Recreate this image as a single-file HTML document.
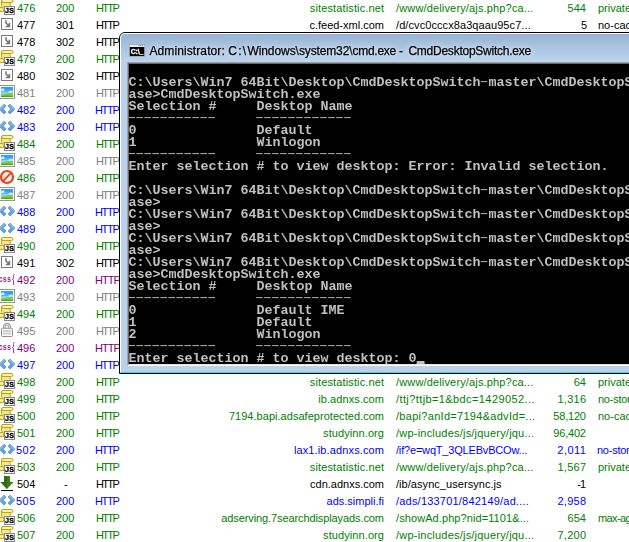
<!DOCTYPE html>
<html><head><meta charset="utf-8"><title>Fiddler</title>
<style>
html,body{margin:0;padding:0;background:#fff;}
body{width:629px;height:542px;overflow:hidden;}
#root{position:relative;width:629px;height:542px;overflow:hidden;background:#fff;font-family:"Liberation Sans",sans-serif;font-size:11px;}
.r{position:absolute;left:0;width:629px;height:17px;line-height:17px;white-space:pre;}
.r span{position:absolute;top:1px;height:17px;}
.ic{position:absolute;left:-1px;top:0;will-change:transform;}
.n{left:17px}.s{left:56px}.p{left:95px}
.h{right:245px;text-align:right}
.u{left:396px}
.b{right:43px;text-align:right}
.c{left:597px}
#win{position:absolute;left:119px;top:32px;width:560px;height:342px;box-sizing:border-box;border:1px solid #000;border-radius:6px 6px 0 0;background:#b9d1ea;overflow:hidden;}
#win .hl{position:absolute;left:0;top:0;right:0;bottom:0;border:1px solid #fff;border-bottom-color:#35d0e8;border-radius:5px 5px 0 0;}
#tb{position:absolute;left:1px;top:1px;right:0;height:28px;background:linear-gradient(#98b4d4,#bcd4ef);}
#ttl{-webkit-text-stroke:0.250px #000;position:absolute;left:0;top:10px;font-size:12px;line-height:16px;color:#000;white-space:pre;text-shadow:0 0 5px rgba(255,255,255,.75),0 0 9px rgba(255,255,255,.6);}
#cicon{position:absolute;left:9px;top:11px;will-change:transform;}
#edge{position:absolute;left:7px;top:29px;width:600px;height:304px;box-sizing:border-box;border:1px solid #a0a0a0;border-right-color:#fff;border-bottom-color:#fff;}
#edge2{position:absolute;left:0;top:0;right:0;bottom:0;border:1px solid #696969;border-right-color:#e3e3e3;border-bottom-color:#e3e3e3;}
#con{position:absolute;left:9px;top:31px;width:580px;height:300px;background:#000;color:#c0c0c0;font-family:"Liberation Mono",monospace;font-weight:bold;font-size:12px;line-height:12px;white-space:pre;overflow:hidden;margin:0;transform:scaleX(1.11093);transform-origin:0 0;will-change:transform;}
.l{position:relative;height:12px;top:1px;left:-0.400px;}
.hc{display:inline-block;position:relative;width:7.201px;height:12px;vertical-align:top;}
.d{position:absolute;left:-3.520px;top:-1px;font-weight:normal;color:#b0b0b0;letter-spacing:-3.200px;transform:scaleX(1.8);transform-origin:0 0;}
.d2{left:111.700px}
.cb{position:absolute;left:259.240px;top:8px;width:7.200px;height:3px;background:#c0c0c0;}
#ttl span{position:absolute;top:0;}
</style></head><body><div id="root">

<div class="r" style="top:-1px;color:#008000"><svg class="ic" width="16" height="16" viewBox="0 0 16 16"><path d="M2.500 1.500L11 3.500L12 12.500H4.500L2.500 6z" fill="#f5e88a" stroke="#c6a200" stroke-width="1"/><rect x="2.500" y="0.500" width="11.500" height="3" rx="1.500" fill="#f8efa4" stroke="#c6a200" stroke-width="1"/><path d="M4.500 2h8" stroke="#fdf8d0" stroke-width="1" fill="none"/><rect x="-0.500" y="8.500" width="5.500" height="4" rx="1.500" fill="#f5e88a" stroke="#c6a200" stroke-width="1"/><path d="M0 10.500h3.500" stroke="#fbf3b8" stroke-width="1" fill="none"/><rect x="5.500" y="7.500" width="10" height="8" fill="#fff" stroke="#85859a" stroke-width="1"/><text x="10.600" y="14" text-anchor="middle" font-family="Liberation Sans, sans-serif" font-weight="bold" font-size="7.200px" fill="#000" stroke="#000" stroke-width="0.300" letter-spacing="0.300">JS</text></svg><span class="n" style="left:17.00px;letter-spacing:0.000px">476</span><span class="s" style="left:56.00px;letter-spacing:0.000px">200</span><span class="p" style="left:96.00px;letter-spacing:-1.667px">HTTP</span><span class="h" style="right:auto;left:309.86px;letter-spacing:0.125px">sitestatistic.net</span><span class="u" style="left:396.00px;letter-spacing:0.154px">/www/delivery/ajs.php?ca...</span><span class="b" style="right:auto;left:567.61px;letter-spacing:0.000px">544</span><span class="c" style="left:598.00px;letter-spacing:0.000px">private</span></div>
<div class="r" style="top:16px;color:#000000"><svg class="ic" width="16" height="16" viewBox="0 0 16 16"><rect x="2.500" y="2.500" width="11" height="11" fill="#fff" stroke="#7c7c7c"/><path d="M7 4.300v2.700l3 3M10.400 6.800v3.700h-3.700" fill="none" stroke="#787878" stroke-width="1.600"/></svg><span class="n" style="left:17.00px;letter-spacing:0.000px">477</span><span class="s" style="left:56.00px;letter-spacing:0.000px">301</span><span class="p" style="left:96.00px;letter-spacing:-1.667px">HTTP</span><span class="h" style="right:auto;left:309.41px;letter-spacing:0.000px">c.feed-xml.com</span><span class="u" style="left:396.00px;letter-spacing:0.083px">/d/cvc0cccx8a3qaau95c7...</span><span class="b" style="right:auto;left:580.88px;letter-spacing:0.000px">5</span><span class="c" style="left:598.00px;letter-spacing:0.000px">no-cache</span></div>
<div class="r" style="top:33px;color:#000000"><svg class="ic" width="16" height="16" viewBox="0 0 16 16"><rect x="2.500" y="2.500" width="11" height="11" fill="#fff" stroke="#7c7c7c"/><path d="M7 4.300v2.700l3 3M10.400 6.800v3.700h-3.700" fill="none" stroke="#787878" stroke-width="1.600"/></svg><span class="n" style="left:17.00px;letter-spacing:0.000px">478</span><span class="s" style="left:56.00px;letter-spacing:0.000px">302</span><span class="p" style="left:96.00px;letter-spacing:-1.667px">HTTP</span></div>
<div class="r" style="top:50px;color:#008000"><svg class="ic" width="16" height="16" viewBox="0 0 16 16"><path d="M2.500 1.500L11 3.500L12 12.500H4.500L2.500 6z" fill="#f5e88a" stroke="#c6a200" stroke-width="1"/><rect x="2.500" y="0.500" width="11.500" height="3" rx="1.500" fill="#f8efa4" stroke="#c6a200" stroke-width="1"/><path d="M4.500 2h8" stroke="#fdf8d0" stroke-width="1" fill="none"/><rect x="-0.500" y="8.500" width="5.500" height="4" rx="1.500" fill="#f5e88a" stroke="#c6a200" stroke-width="1"/><path d="M0 10.500h3.500" stroke="#fbf3b8" stroke-width="1" fill="none"/><rect x="5.500" y="7.500" width="10" height="8" fill="#fff" stroke="#85859a" stroke-width="1"/><text x="10.600" y="14" text-anchor="middle" font-family="Liberation Sans, sans-serif" font-weight="bold" font-size="7.200px" fill="#000" stroke="#000" stroke-width="0.300" letter-spacing="0.300">JS</text></svg><span class="n" style="left:17.00px;letter-spacing:0.000px">479</span><span class="s" style="left:56.00px;letter-spacing:0.000px">200</span><span class="p" style="left:96.00px;letter-spacing:-1.667px">HTTP</span></div>
<div class="r" style="top:67px;color:#000000"><svg class="ic" width="16" height="16" viewBox="0 0 16 16"><rect x="2.500" y="2.500" width="11" height="11" fill="#fff" stroke="#7c7c7c"/><path d="M7 4.300v2.700l3 3M10.400 6.800v3.700h-3.700" fill="none" stroke="#787878" stroke-width="1.600"/></svg><span class="n" style="left:17.00px;letter-spacing:0.000px">480</span><span class="s" style="left:56.00px;letter-spacing:0.000px">302</span><span class="p" style="left:96.00px;letter-spacing:-1.667px">HTTP</span></div>
<div class="r" style="top:84px;color:#808080"><svg class="ic" width="16" height="16" viewBox="0 0 16 16"><rect x="0.500" y="1.500" width="15" height="13" fill="#fff" stroke="#94949a"/><rect x="2" y="3" width="12" height="4" fill="#349ff0"/><rect x="2" y="6" width="12" height="2" fill="#58b4f4"/><rect x="2" y="8" width="12" height="3" fill="#8ed0f8"/><path d="M2 5.500c1-2 3.500-1.500 3.800 1l-3.800 1zM9 8.500c1-2 3.500-2.500 5-1v2z" fill="#c8ecfb"/><path d="M2 10.500c4-0.300 7-2 12-1.800v4.300h-12z" fill="#86cc38"/><path d="M2 12c3-0.800 8-0.800 12 0v1h-12z" fill="#4aa41e"/></svg><span class="n" style="left:17.00px;letter-spacing:0.000px">481</span><span class="s" style="left:56.00px;letter-spacing:0.000px">200</span><span class="p" style="left:96.00px;letter-spacing:-1.667px">HTTP</span></div>
<div class="r" style="top:101px;color:#0000ff"><svg class="ic" width="16" height="16" viewBox="0 0 16 16"><path d="M5 3L0 8l5 5 2-2-3-3 3-3z" fill="#62a2de" stroke="#3f7fc6" stroke-width="0.600"/><path d="M11 3l5 5-5 5-2-2 3-3-3-3z" fill="#62a2de" stroke="#3f7fc6" stroke-width="0.600"/><path d="M5 3L0 8l1 1 5-5z" fill="#8cbce8"/><path d="M11 3l5 5-1 1-5-5z" fill="#8cbce8"/></svg><span class="n" style="left:17.00px;letter-spacing:0.000px">482</span><span class="s" style="left:56.00px;letter-spacing:0.000px">200</span><span class="p" style="left:95.00px;letter-spacing:-1.333px">HTTP</span></div>
<div class="r" style="top:118px;color:#0000ff"><svg class="ic" width="16" height="16" viewBox="0 0 16 16"><path d="M5 3L0 8l5 5 2-2-3-3 3-3z" fill="#62a2de" stroke="#3f7fc6" stroke-width="0.600"/><path d="M11 3l5 5-5 5-2-2 3-3-3-3z" fill="#62a2de" stroke="#3f7fc6" stroke-width="0.600"/><path d="M5 3L0 8l1 1 5-5z" fill="#8cbce8"/><path d="M11 3l5 5-1 1-5-5z" fill="#8cbce8"/></svg><span class="n" style="left:17.00px;letter-spacing:0.000px">483</span><span class="s" style="left:56.00px;letter-spacing:0.000px">200</span><span class="p" style="left:95.00px;letter-spacing:-1.333px">HTTP</span></div>
<div class="r" style="top:135px;color:#008000"><svg class="ic" width="16" height="16" viewBox="0 0 16 16"><path d="M2.500 1.500L11 3.500L12 12.500H4.500L2.500 6z" fill="#f5e88a" stroke="#c6a200" stroke-width="1"/><rect x="2.500" y="0.500" width="11.500" height="3" rx="1.500" fill="#f8efa4" stroke="#c6a200" stroke-width="1"/><path d="M4.500 2h8" stroke="#fdf8d0" stroke-width="1" fill="none"/><rect x="-0.500" y="8.500" width="5.500" height="4" rx="1.500" fill="#f5e88a" stroke="#c6a200" stroke-width="1"/><path d="M0 10.500h3.500" stroke="#fbf3b8" stroke-width="1" fill="none"/><rect x="5.500" y="7.500" width="10" height="8" fill="#fff" stroke="#85859a" stroke-width="1"/><text x="10.600" y="14" text-anchor="middle" font-family="Liberation Sans, sans-serif" font-weight="bold" font-size="7.200px" fill="#000" stroke="#000" stroke-width="0.300" letter-spacing="0.300">JS</text></svg><span class="n" style="left:17.00px;letter-spacing:0.000px">484</span><span class="s" style="left:56.00px;letter-spacing:0.000px">200</span><span class="p" style="left:96.00px;letter-spacing:-1.667px">HTTP</span></div>
<div class="r" style="top:152px;color:#808080"><svg class="ic" width="16" height="16" viewBox="0 0 16 16"><rect x="0.500" y="1.500" width="15" height="13" fill="#fff" stroke="#94949a"/><rect x="2" y="3" width="12" height="4" fill="#349ff0"/><rect x="2" y="6" width="12" height="2" fill="#58b4f4"/><rect x="2" y="8" width="12" height="3" fill="#8ed0f8"/><path d="M2 5.500c1-2 3.500-1.500 3.800 1l-3.800 1zM9 8.500c1-2 3.500-2.500 5-1v2z" fill="#c8ecfb"/><path d="M2 10.500c4-0.300 7-2 12-1.800v4.300h-12z" fill="#86cc38"/><path d="M2 12c3-0.800 8-0.800 12 0v1h-12z" fill="#4aa41e"/></svg><span class="n" style="left:17.00px;letter-spacing:0.000px">485</span><span class="s" style="left:56.00px;letter-spacing:0.000px">200</span><span class="p" style="left:96.00px;letter-spacing:-1.667px">HTTP</span></div>
<div class="r" style="top:169px;color:#008000"><svg class="ic" width="16" height="16" viewBox="0 0 16 16"><circle cx="8" cy="8" r="6" fill="#fdeee8" stroke="#e8431f" stroke-width="2.200"/><path d="M4.200 11.800L11.800 4.200" stroke="#e8431f" stroke-width="1.800"/></svg><span class="n" style="left:17.00px;letter-spacing:0.000px">486</span><span class="s" style="left:56.00px;letter-spacing:0.000px">200</span><span class="p" style="left:96.00px;letter-spacing:-1.667px">HTTP</span></div>
<div class="r" style="top:186px;color:#808080"><svg class="ic" width="16" height="16" viewBox="0 0 16 16"><rect x="0.500" y="1.500" width="15" height="13" fill="#fff" stroke="#94949a"/><rect x="2" y="3" width="12" height="4" fill="#349ff0"/><rect x="2" y="6" width="12" height="2" fill="#58b4f4"/><rect x="2" y="8" width="12" height="3" fill="#8ed0f8"/><path d="M2 5.500c1-2 3.500-1.500 3.800 1l-3.800 1zM9 8.500c1-2 3.500-2.500 5-1v2z" fill="#c8ecfb"/><path d="M2 10.500c4-0.300 7-2 12-1.800v4.300h-12z" fill="#86cc38"/><path d="M2 12c3-0.800 8-0.800 12 0v1h-12z" fill="#4aa41e"/></svg><span class="n" style="left:17.00px;letter-spacing:0.000px">487</span><span class="s" style="left:56.00px;letter-spacing:0.000px">200</span><span class="p" style="left:96.00px;letter-spacing:-1.667px">HTTP</span></div>
<div class="r" style="top:203px;color:#0000ff"><svg class="ic" width="16" height="16" viewBox="0 0 16 16"><path d="M5 3L0 8l5 5 2-2-3-3 3-3z" fill="#62a2de" stroke="#3f7fc6" stroke-width="0.600"/><path d="M11 3l5 5-5 5-2-2 3-3-3-3z" fill="#62a2de" stroke="#3f7fc6" stroke-width="0.600"/><path d="M5 3L0 8l1 1 5-5z" fill="#8cbce8"/><path d="M11 3l5 5-1 1-5-5z" fill="#8cbce8"/></svg><span class="n" style="left:17.00px;letter-spacing:0.000px">488</span><span class="s" style="left:56.00px;letter-spacing:0.000px">200</span><span class="p" style="left:95.00px;letter-spacing:-1.333px">HTTP</span></div>
<div class="r" style="top:220px;color:#0000ff"><svg class="ic" width="16" height="16" viewBox="0 0 16 16"><path d="M5 3L0 8l5 5 2-2-3-3 3-3z" fill="#62a2de" stroke="#3f7fc6" stroke-width="0.600"/><path d="M11 3l5 5-5 5-2-2 3-3-3-3z" fill="#62a2de" stroke="#3f7fc6" stroke-width="0.600"/><path d="M5 3L0 8l1 1 5-5z" fill="#8cbce8"/><path d="M11 3l5 5-1 1-5-5z" fill="#8cbce8"/></svg><span class="n" style="left:17.00px;letter-spacing:0.000px">489</span><span class="s" style="left:56.00px;letter-spacing:0.000px">200</span><span class="p" style="left:95.00px;letter-spacing:-1.333px">HTTP</span></div>
<div class="r" style="top:237px;color:#008000"><svg class="ic" width="16" height="16" viewBox="0 0 16 16"><path d="M2.500 1.500L11 3.500L12 12.500H4.500L2.500 6z" fill="#f5e88a" stroke="#c6a200" stroke-width="1"/><rect x="2.500" y="0.500" width="11.500" height="3" rx="1.500" fill="#f8efa4" stroke="#c6a200" stroke-width="1"/><path d="M4.500 2h8" stroke="#fdf8d0" stroke-width="1" fill="none"/><rect x="-0.500" y="8.500" width="5.500" height="4" rx="1.500" fill="#f5e88a" stroke="#c6a200" stroke-width="1"/><path d="M0 10.500h3.500" stroke="#fbf3b8" stroke-width="1" fill="none"/><rect x="5.500" y="7.500" width="10" height="8" fill="#fff" stroke="#85859a" stroke-width="1"/><text x="10.600" y="14" text-anchor="middle" font-family="Liberation Sans, sans-serif" font-weight="bold" font-size="7.200px" fill="#000" stroke="#000" stroke-width="0.300" letter-spacing="0.300">JS</text></svg><span class="n" style="left:17.00px;letter-spacing:0.000px">490</span><span class="s" style="left:56.00px;letter-spacing:0.000px">200</span><span class="p" style="left:96.00px;letter-spacing:-1.667px">HTTP</span></div>
<div class="r" style="top:254px;color:#000000"><svg class="ic" width="16" height="16" viewBox="0 0 16 16"><rect x="2.500" y="2.500" width="11" height="11" fill="#fff" stroke="#7c7c7c"/><path d="M7 4.300v2.700l3 3M10.400 6.800v3.700h-3.700" fill="none" stroke="#787878" stroke-width="1.600"/></svg><span class="n" style="left:17.00px;letter-spacing:0.000px">491</span><span class="s" style="left:56.00px;letter-spacing:0.000px">302</span><span class="p" style="left:96.00px;letter-spacing:-1.667px">HTTP</span></div>
<div class="r" style="top:271px;color:#800080"><svg class="ic" width="16" height="16" viewBox="0 0 16 16"><text x="-0.300" y="11" font-family="Liberation Mono, monospace" font-weight="bold" font-size="9.500px" fill="#902090" textLength="12.300" lengthAdjust="spacingAndGlyphs">css</text><path d="M15.500 3.500c-1.500 0-1 0.500-1 2v1.500c0 1-0.500 1.500-1.500 1.500c1 0 1.500 0.500 1.500 1.500v2c0 1.500-0.500 2 1 2" fill="none" stroke="#a03898" stroke-width="1"/></svg><span class="n" style="left:17.00px;letter-spacing:0.000px">492</span><span class="s" style="left:56.00px;letter-spacing:0.000px">200</span><span class="p" style="left:95.00px;letter-spacing:-1.000px">HTTP</span></div>
<div class="r" style="top:288px;color:#808080"><svg class="ic" width="16" height="16" viewBox="0 0 16 16"><rect x="0.500" y="1.500" width="15" height="13" fill="#fff" stroke="#94949a"/><rect x="2" y="3" width="12" height="4" fill="#349ff0"/><rect x="2" y="6" width="12" height="2" fill="#58b4f4"/><rect x="2" y="8" width="12" height="3" fill="#8ed0f8"/><path d="M2 5.500c1-2 3.500-1.500 3.800 1l-3.800 1zM9 8.500c1-2 3.500-2.500 5-1v2z" fill="#c8ecfb"/><path d="M2 10.500c4-0.300 7-2 12-1.800v4.300h-12z" fill="#86cc38"/><path d="M2 12c3-0.800 8-0.800 12 0v1h-12z" fill="#4aa41e"/></svg><span class="n" style="left:17.00px;letter-spacing:0.000px">493</span><span class="s" style="left:56.00px;letter-spacing:0.000px">200</span><span class="p" style="left:96.00px;letter-spacing:-1.667px">HTTP</span></div>
<div class="r" style="top:305px;color:#008000"><svg class="ic" width="16" height="16" viewBox="0 0 16 16"><path d="M2.500 1.500L11 3.500L12 12.500H4.500L2.500 6z" fill="#f5e88a" stroke="#c6a200" stroke-width="1"/><rect x="2.500" y="0.500" width="11.500" height="3" rx="1.500" fill="#f8efa4" stroke="#c6a200" stroke-width="1"/><path d="M4.500 2h8" stroke="#fdf8d0" stroke-width="1" fill="none"/><rect x="-0.500" y="8.500" width="5.500" height="4" rx="1.500" fill="#f5e88a" stroke="#c6a200" stroke-width="1"/><path d="M0 10.500h3.500" stroke="#fbf3b8" stroke-width="1" fill="none"/><rect x="5.500" y="7.500" width="10" height="8" fill="#fff" stroke="#85859a" stroke-width="1"/><text x="10.600" y="14" text-anchor="middle" font-family="Liberation Sans, sans-serif" font-weight="bold" font-size="7.200px" fill="#000" stroke="#000" stroke-width="0.300" letter-spacing="0.300">JS</text></svg><span class="n" style="left:17.00px;letter-spacing:0.000px">494</span><span class="s" style="left:56.00px;letter-spacing:0.000px">200</span><span class="p" style="left:96.00px;letter-spacing:-1.667px">HTTP</span></div>
<div class="r" style="top:322px;color:#808080"><svg class="ic" width="16" height="16" viewBox="0 0 16 16"><path d="M5.300 7v-2a2.700 2.700 0 0 1 5.400 0v2" fill="none" stroke="#8e8e8e" stroke-width="2.400"/><path d="M5.300 7v-2a2.700 2.700 0 0 1 5.400 0v2" fill="none" stroke="#e8e8e8" stroke-width="1"/><rect x="2.500" y="6.200" width="11" height="8.300" rx="1" fill="#f3f3f3" stroke="#8e8e8e"/><path d="M4.200 9h7.600M4.200 11.500h7.600" stroke="#c6c6c6" stroke-width="1.500"/></svg><span class="n" style="left:17.00px;letter-spacing:0.000px">495</span><span class="s" style="left:56.00px;letter-spacing:0.000px">200</span><span class="p" style="left:96.00px;letter-spacing:-1.667px">HTTP</span></div>
<div class="r" style="top:339px;color:#800080"><svg class="ic" width="16" height="16" viewBox="0 0 16 16"><text x="-0.300" y="11" font-family="Liberation Mono, monospace" font-weight="bold" font-size="9.500px" fill="#902090" textLength="12.300" lengthAdjust="spacingAndGlyphs">css</text><path d="M15.500 3.500c-1.500 0-1 0.500-1 2v1.500c0 1-0.500 1.500-1.500 1.500c1 0 1.500 0.500 1.500 1.500v2c0 1.500-0.500 2 1 2" fill="none" stroke="#a03898" stroke-width="1"/></svg><span class="n" style="left:17.00px;letter-spacing:0.000px">496</span><span class="s" style="left:56.00px;letter-spacing:0.000px">200</span><span class="p" style="left:95.00px;letter-spacing:-1.000px">HTTP</span></div>
<div class="r" style="top:356px;color:#0000ff"><svg class="ic" width="16" height="16" viewBox="0 0 16 16"><path d="M5 3L0 8l5 5 2-2-3-3 3-3z" fill="#62a2de" stroke="#3f7fc6" stroke-width="0.600"/><path d="M11 3l5 5-5 5-2-2 3-3-3-3z" fill="#62a2de" stroke="#3f7fc6" stroke-width="0.600"/><path d="M5 3L0 8l1 1 5-5z" fill="#8cbce8"/><path d="M11 3l5 5-1 1-5-5z" fill="#8cbce8"/></svg><span class="n" style="left:17.00px;letter-spacing:0.000px">497</span><span class="s" style="left:56.00px;letter-spacing:0.000px">200</span><span class="p" style="left:95.00px;letter-spacing:-1.333px">HTTP</span></div>
<div class="r" style="top:373px;color:#008000"><svg class="ic" width="16" height="16" viewBox="0 0 16 16"><path d="M2.500 1.500L11 3.500L12 12.500H4.500L2.500 6z" fill="#f5e88a" stroke="#c6a200" stroke-width="1"/><rect x="2.500" y="0.500" width="11.500" height="3" rx="1.500" fill="#f8efa4" stroke="#c6a200" stroke-width="1"/><path d="M4.500 2h8" stroke="#fdf8d0" stroke-width="1" fill="none"/><rect x="-0.500" y="8.500" width="5.500" height="4" rx="1.500" fill="#f5e88a" stroke="#c6a200" stroke-width="1"/><path d="M0 10.500h3.500" stroke="#fbf3b8" stroke-width="1" fill="none"/><rect x="5.500" y="7.500" width="10" height="8" fill="#fff" stroke="#85859a" stroke-width="1"/><text x="10.600" y="14" text-anchor="middle" font-family="Liberation Sans, sans-serif" font-weight="bold" font-size="7.200px" fill="#000" stroke="#000" stroke-width="0.300" letter-spacing="0.300">JS</text></svg><span class="n" style="left:17.00px;letter-spacing:0.000px">498</span><span class="s" style="left:56.00px;letter-spacing:0.000px">200</span><span class="p" style="left:96.00px;letter-spacing:-1.667px">HTTP</span><span class="h" style="right:auto;left:309.86px;letter-spacing:0.125px">sitestatistic.net</span><span class="u" style="left:396.00px;letter-spacing:0.154px">/www/delivery/ajs.php?ca...</span><span class="b" style="right:auto;left:573.75px;letter-spacing:0.000px">64</span><span class="c" style="left:598.00px;letter-spacing:0.000px">private</span></div>
<div class="r" style="top:390px;color:#008000"><svg class="ic" width="16" height="16" viewBox="0 0 16 16"><path d="M2.500 1.500L11 3.500L12 12.500H4.500L2.500 6z" fill="#f5e88a" stroke="#c6a200" stroke-width="1"/><rect x="2.500" y="0.500" width="11.500" height="3" rx="1.500" fill="#f8efa4" stroke="#c6a200" stroke-width="1"/><path d="M4.500 2h8" stroke="#fdf8d0" stroke-width="1" fill="none"/><rect x="-0.500" y="8.500" width="5.500" height="4" rx="1.500" fill="#f5e88a" stroke="#c6a200" stroke-width="1"/><path d="M0 10.500h3.500" stroke="#fbf3b8" stroke-width="1" fill="none"/><rect x="5.500" y="7.500" width="10" height="8" fill="#fff" stroke="#85859a" stroke-width="1"/><text x="10.600" y="14" text-anchor="middle" font-family="Liberation Sans, sans-serif" font-weight="bold" font-size="7.200px" fill="#000" stroke="#000" stroke-width="0.300" letter-spacing="0.300">JS</text></svg><span class="n" style="left:17.00px;letter-spacing:0.000px">499</span><span class="s" style="left:56.00px;letter-spacing:0.000px">200</span><span class="p" style="left:96.00px;letter-spacing:-1.667px">HTTP</span><span class="h" style="right:auto;left:318.19px;letter-spacing:0.091px">ib.adnxs.com</span><span class="u" style="left:396.00px;letter-spacing:0.400px">/ttj?ttjb=1&amp;bdc=1429052...</span><span class="b" style="right:auto;left:557.47px;letter-spacing:0.250px">1,316</span><span class="c" style="left:598.00px;letter-spacing:-0.250px">no-store</span></div>
<div class="r" style="top:407px;color:#008000"><svg class="ic" width="16" height="16" viewBox="0 0 16 16"><path d="M2.500 1.500L11 3.500L12 12.500H4.500L2.500 6z" fill="#f5e88a" stroke="#c6a200" stroke-width="1"/><rect x="2.500" y="0.500" width="11.500" height="3" rx="1.500" fill="#f8efa4" stroke="#c6a200" stroke-width="1"/><path d="M4.500 2h8" stroke="#fdf8d0" stroke-width="1" fill="none"/><rect x="-0.500" y="8.500" width="5.500" height="4" rx="1.500" fill="#f5e88a" stroke="#c6a200" stroke-width="1"/><path d="M0 10.500h3.500" stroke="#fbf3b8" stroke-width="1" fill="none"/><rect x="5.500" y="7.500" width="10" height="8" fill="#fff" stroke="#85859a" stroke-width="1"/><text x="10.600" y="14" text-anchor="middle" font-family="Liberation Sans, sans-serif" font-weight="bold" font-size="7.200px" fill="#000" stroke="#000" stroke-width="0.300" letter-spacing="0.300">JS</text></svg><span class="n" style="left:17.00px;letter-spacing:0.000px">500</span><span class="s" style="left:56.00px;letter-spacing:0.000px">200</span><span class="p" style="left:96.00px;letter-spacing:-1.667px">HTTP</span><span class="h" style="right:auto;left:228.88px;letter-spacing:0.036px">7194.bapi.adsafeprotected.com</span><span class="u" style="left:396.00px;letter-spacing:0.292px">/bapi?anId=7194&amp;advId=...</span><span class="b" style="right:auto;left:553.33px;letter-spacing:-0.200px">58,120</span><span class="c" style="left:598.00px;letter-spacing:0.000px">no-cache</span></div>
<div class="r" style="top:424px;color:#008000"><svg class="ic" width="16" height="16" viewBox="0 0 16 16"><path d="M2.500 1.500L11 3.500L12 12.500H4.500L2.500 6z" fill="#f5e88a" stroke="#c6a200" stroke-width="1"/><rect x="2.500" y="0.500" width="11.500" height="3" rx="1.500" fill="#f8efa4" stroke="#c6a200" stroke-width="1"/><path d="M4.500 2h8" stroke="#fdf8d0" stroke-width="1" fill="none"/><rect x="-0.500" y="8.500" width="5.500" height="4" rx="1.500" fill="#f5e88a" stroke="#c6a200" stroke-width="1"/><path d="M0 10.500h3.500" stroke="#fbf3b8" stroke-width="1" fill="none"/><rect x="5.500" y="7.500" width="10" height="8" fill="#fff" stroke="#85859a" stroke-width="1"/><text x="10.600" y="14" text-anchor="middle" font-family="Liberation Sans, sans-serif" font-weight="bold" font-size="7.200px" fill="#000" stroke="#000" stroke-width="0.300" letter-spacing="0.300">JS</text></svg><span class="n" style="left:17.00px;letter-spacing:0.000px">501</span><span class="s" style="left:56.00px;letter-spacing:0.000px">200</span><span class="p" style="left:96.00px;letter-spacing:-1.667px">HTTP</span><span class="h" style="right:auto;left:323.05px;letter-spacing:0.091px">studyinn.org</span><span class="u" style="left:396.00px;letter-spacing:0.214px">/wp-includes/js/jquery/jqu...</span><span class="b" style="right:auto;left:553.33px;letter-spacing:-0.200px">96,402</span></div>
<div class="r" style="top:441px;color:#0000ff"><svg class="ic" width="16" height="16" viewBox="0 0 16 16"><path d="M5 3L0 8l5 5 2-2-3-3 3-3z" fill="#62a2de" stroke="#3f7fc6" stroke-width="0.600"/><path d="M11 3l5 5-5 5-2-2 3-3-3-3z" fill="#62a2de" stroke="#3f7fc6" stroke-width="0.600"/><path d="M5 3L0 8l1 1 5-5z" fill="#8cbce8"/><path d="M11 3l5 5-1 1-5-5z" fill="#8cbce8"/></svg><span class="n" style="left:16.00px;letter-spacing:0.500px">502</span><span class="s" style="left:56.00px;letter-spacing:0.000px">200</span><span class="p" style="left:95.00px;letter-spacing:-1.333px">HTTP</span><span class="h" style="right:auto;left:293.94px;letter-spacing:0.125px">lax1.ib.adnxs.com</span><span class="u" style="left:396.00px;letter-spacing:-0.182px">/if?e=wqT_3QLEBvBCOw...</span><span class="b" style="right:auto;left:557.27px;letter-spacing:0.500px">2,011</span><span class="c" style="left:597.00px;letter-spacing:-0.250px">no-store</span></div>
<div class="r" style="top:458px;color:#008000"><svg class="ic" width="16" height="16" viewBox="0 0 16 16"><path d="M2.500 1.500L11 3.500L12 12.500H4.500L2.500 6z" fill="#f5e88a" stroke="#c6a200" stroke-width="1"/><rect x="2.500" y="0.500" width="11.500" height="3" rx="1.500" fill="#f8efa4" stroke="#c6a200" stroke-width="1"/><path d="M4.500 2h8" stroke="#fdf8d0" stroke-width="1" fill="none"/><rect x="-0.500" y="8.500" width="5.500" height="4" rx="1.500" fill="#f5e88a" stroke="#c6a200" stroke-width="1"/><path d="M0 10.500h3.500" stroke="#fbf3b8" stroke-width="1" fill="none"/><rect x="5.500" y="7.500" width="10" height="8" fill="#fff" stroke="#85859a" stroke-width="1"/><text x="10.600" y="14" text-anchor="middle" font-family="Liberation Sans, sans-serif" font-weight="bold" font-size="7.200px" fill="#000" stroke="#000" stroke-width="0.300" letter-spacing="0.300">JS</text></svg><span class="n" style="left:17.00px;letter-spacing:0.000px">503</span><span class="s" style="left:56.00px;letter-spacing:0.000px">200</span><span class="p" style="left:96.00px;letter-spacing:-1.667px">HTTP</span><span class="h" style="right:auto;left:309.86px;letter-spacing:0.125px">sitestatistic.net</span><span class="u" style="left:396.00px;letter-spacing:0.154px">/www/delivery/ajs.php?ca...</span><span class="b" style="right:auto;left:557.47px;letter-spacing:0.250px">1,567</span><span class="c" style="left:598.00px;letter-spacing:0.000px">private</span></div>
<div class="r" style="top:475px;color:#000000"><svg class="ic" width="16" height="16" viewBox="0 0 16 16"><path d="M5 1h6v6h3.500l-6.500 7-6.500-7h3.500z" fill="#3a7d12"/><path d="M5 1h3v13l-6.500-7h3.500z" fill="#2f6a0c"/><rect x="2" y="15" width="12" height="1" fill="#000"/></svg><span class="n" style="left:17.00px;letter-spacing:0.000px">504</span><span class="s" style="left:64.00px;letter-spacing:0.000px">-</span><span class="p" style="left:96.00px;letter-spacing:-1.667px">HTTP</span><span class="h" style="right:auto;left:310.02px;letter-spacing:0.000px">cdn.adnxs.com</span><span class="u" style="left:396.00px;letter-spacing:0.050px">/ib/async_usersync.js</span><span class="b" style="right:auto;left:577.22px;letter-spacing:-1.000px">-1</span></div>
<div class="r" style="top:492px;color:#0000ff"><svg class="ic" width="16" height="16" viewBox="0 0 16 16"><path d="M5 3L0 8l5 5 2-2-3-3 3-3z" fill="#62a2de" stroke="#3f7fc6" stroke-width="0.600"/><path d="M11 3l5 5-5 5-2-2 3-3-3-3z" fill="#62a2de" stroke="#3f7fc6" stroke-width="0.600"/><path d="M5 3L0 8l1 1 5-5z" fill="#8cbce8"/><path d="M11 3l5 5-1 1-5-5z" fill="#8cbce8"/></svg><span class="n" style="left:16.00px;letter-spacing:0.500px">505</span><span class="s" style="left:56.00px;letter-spacing:0.000px">200</span><span class="p" style="left:95.00px;letter-spacing:-1.333px">HTTP</span><span class="h" style="right:auto;left:326.52px;letter-spacing:0.000px">ads.simpli.fi</span><span class="u" style="left:396.00px;letter-spacing:0.208px">/ads/133701/842149/ad....</span><span class="b" style="right:auto;left:557.47px;letter-spacing:0.250px">2,958</span></div>
<div class="r" style="top:509px;color:#008000"><svg class="ic" width="16" height="16" viewBox="0 0 16 16"><path d="M2.500 1.500L11 3.500L12 12.500H4.500L2.500 6z" fill="#f5e88a" stroke="#c6a200" stroke-width="1"/><rect x="2.500" y="0.500" width="11.500" height="3" rx="1.500" fill="#f8efa4" stroke="#c6a200" stroke-width="1"/><path d="M4.500 2h8" stroke="#fdf8d0" stroke-width="1" fill="none"/><rect x="-0.500" y="8.500" width="5.500" height="4" rx="1.500" fill="#f5e88a" stroke="#c6a200" stroke-width="1"/><path d="M0 10.500h3.500" stroke="#fbf3b8" stroke-width="1" fill="none"/><rect x="5.500" y="7.500" width="10" height="8" fill="#fff" stroke="#85859a" stroke-width="1"/><text x="10.600" y="14" text-anchor="middle" font-family="Liberation Sans, sans-serif" font-weight="bold" font-size="7.200px" fill="#000" stroke="#000" stroke-width="0.300" letter-spacing="0.300">JS</text></svg><span class="n" style="left:17.00px;letter-spacing:0.000px">506</span><span class="s" style="left:56.00px;letter-spacing:0.000px">200</span><span class="p" style="left:96.00px;letter-spacing:-1.667px">HTTP</span><span class="h" style="right:auto;left:221.30px;letter-spacing:-0.100px">adserving.7searchdisplayads.com</span><span class="u" style="left:396.00px;letter-spacing:0.087px">/showAd.php?nid=1101&amp;...</span><span class="b" style="right:auto;left:567.61px;letter-spacing:0.000px">654</span><span class="c" style="left:598.00px;letter-spacing:-0.600px">max-age=0</span></div>
<div class="r" style="top:526px;color:#008000"><svg class="ic" width="16" height="16" viewBox="0 0 16 16"><path d="M2.500 1.500L11 3.500L12 12.500H4.500L2.500 6z" fill="#f5e88a" stroke="#c6a200" stroke-width="1"/><rect x="2.500" y="0.500" width="11.500" height="3" rx="1.500" fill="#f8efa4" stroke="#c6a200" stroke-width="1"/><path d="M4.500 2h8" stroke="#fdf8d0" stroke-width="1" fill="none"/><rect x="-0.500" y="8.500" width="5.500" height="4" rx="1.500" fill="#f5e88a" stroke="#c6a200" stroke-width="1"/><path d="M0 10.500h3.500" stroke="#fbf3b8" stroke-width="1" fill="none"/><rect x="5.500" y="7.500" width="10" height="8" fill="#fff" stroke="#85859a" stroke-width="1"/><text x="10.600" y="14" text-anchor="middle" font-family="Liberation Sans, sans-serif" font-weight="bold" font-size="7.200px" fill="#000" stroke="#000" stroke-width="0.300" letter-spacing="0.300">JS</text></svg><span class="n" style="left:17.00px;letter-spacing:0.000px">507</span><span class="s" style="left:56.00px;letter-spacing:0.000px">200</span><span class="p" style="left:96.00px;letter-spacing:-1.667px">HTTP</span><span class="h" style="right:auto;left:323.05px;letter-spacing:0.091px">studyinn.org</span><span class="u" style="left:396.00px;letter-spacing:0.214px">/wp-includes/js/jquery/jqu...</span><span class="b" style="right:auto;left:557.47px;letter-spacing:0.250px">7,200</span></div>
<div id="win"><div id="tb"></div><div class="hl"></div>
<svg id="cicon" width="16" height="13" viewBox="0 0 16 13"><rect x="0" y="0" width="16" height="12.500" fill="#8c949c"/><rect x="0.500" y="0.700" width="15" height="2.300" fill="#ececec"/><rect x="9.500" y="1.200" width="1" height="1" fill="#4a6ea8"/><rect x="11.200" y="1.200" width="1" height="1" fill="#4a6ea8"/><rect x="12.900" y="1.200" width="1" height="1" fill="#4a6ea8"/><rect x="1" y="3" width="14" height="9" fill="#000"/><text x="1.800" y="10" font-family="Liberation Sans, sans-serif" font-weight="bold" font-size="7px" fill="#fff" stroke="#fff" stroke-width="0.300" textLength="12.500" lengthAdjust="spacing">C:\_</text></svg>
<div id="ttl"><span style="left:29.5px;letter-spacing:0.096px">Administrator: </span><span style="left:108.3px;letter-spacing:1.252px">C:\</span><span style="left:127.4px;letter-spacing:-0.064px">Windows\</span><span style="left:178.9px;letter-spacing:-0.132px">system32\</span><span style="left:232.4px;letter-spacing:-0.248px">cmd.exe </span><span style="left:279.1px;letter-spacing:0.978px">- </span><span style="left:288.4px;letter-spacing:-0.240px">CmdDesktopSwitch.exe</span></div>
<div id="edge"><div id="edge2"></div></div>
<div id="con"><div class="l"></div><div class="l">C:\Users\Win7 64Bit\Desktop\CmdDesktopSwitch<span class="hc"><span class="d">-</span></span>master\CmdDesktopSwitch\bin\x64\Rele</div><div class="l">ase&gt;CmdDesktopSwitch.exe</div><div class="l">Selection #     Desktop Name</div><div class="l"><span class="d">-----------</span><span class="d d2">------------</span></div><div class="l">0               Default</div><div class="l">1               Winlogon</div><div class="l"><span class="d">-----------</span><span class="d d2">------------</span></div><div class="l">Enter selection # to view desktop: Error: Invalid selection.</div><div class="l"></div><div class="l">C:\Users\Win7 64Bit\Desktop\CmdDesktopSwitch<span class="hc"><span class="d">-</span></span>master\CmdDesktopSwitch\bin\x64\Rele</div><div class="l">ase&gt;</div><div class="l">C:\Users\Win7 64Bit\Desktop\CmdDesktopSwitch<span class="hc"><span class="d">-</span></span>master\CmdDesktopSwitch\bin\x64\Rele</div><div class="l">ase&gt;</div><div class="l">C:\Users\Win7 64Bit\Desktop\CmdDesktopSwitch<span class="hc"><span class="d">-</span></span>master\CmdDesktopSwitch\bin\x64\Rele</div><div class="l">ase&gt;</div><div class="l">C:\Users\Win7 64Bit\Desktop\CmdDesktopSwitch<span class="hc"><span class="d">-</span></span>master\CmdDesktopSwitch\bin\x64\Rele</div><div class="l">ase&gt;CmdDesktopSwitch.exe</div><div class="l">Selection #     Desktop Name</div><div class="l"><span class="d">-----------</span><span class="d d2">------------</span></div><div class="l">0               Default IME</div><div class="l">1               Default</div><div class="l">2               Winlogon</div><div class="l"><span class="d">-----------</span><span class="d d2">------------</span></div><div class="l">Enter selection # to view desktop: 0<span class="cur">_</span><b class="cb"></b></div></div>
</div>
</div></body></html>
